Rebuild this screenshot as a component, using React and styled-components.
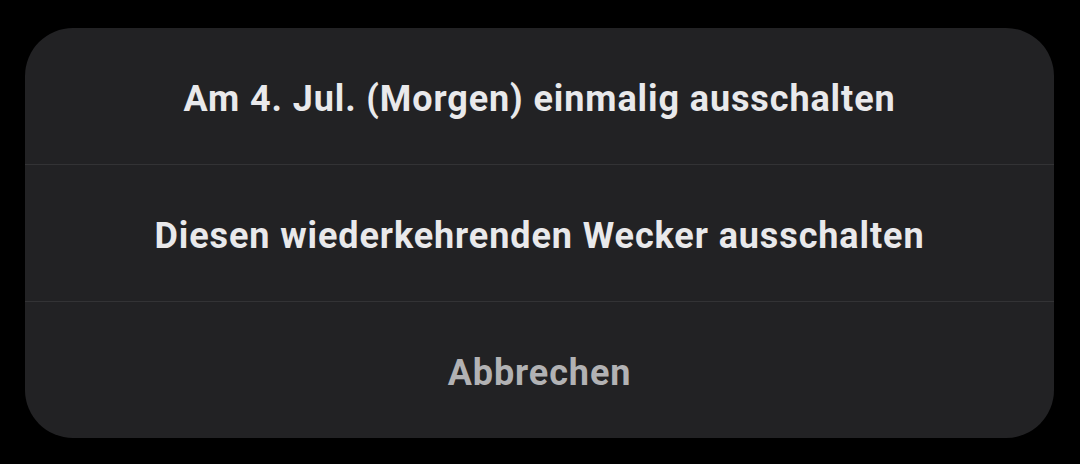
import React from "react";
import styled, { createGlobalStyle } from "styled-components";

const Global = createGlobalStyle`
  html, body { margin: 0; padding: 0; background: #000; }
  body { width: 1080px; height: 464px; overflow: hidden; font-family: Roboto, "Noto Sans", sans-serif; }
`;

const Page = styled.div`
  width: 1080px;
  height: 464px;
  box-sizing: border-box;
  padding: 28px 26px 26px 25px;
  background: #000;
  display: flex;
`;

const Sheet = styled.div`
  flex: 1;
  display: flex;
  flex-direction: column;
  background: #222224;
  border-radius: 48px;
  overflow: hidden;
`;

const Option = styled.button`
  flex: 1;
  display: flex;
  align-items: center;
  justify-content: center;
  border: 0;
  background: transparent;
  padding: 5px 0 0;
  margin: 0;
  font-family: Roboto, "Noto Sans", sans-serif;
  font-weight: 700;
  font-size: 36px;
  letter-spacing: 0.9px;
  color: ${(p) => (p.$muted ? "#b2b2b4" : "#e9e9eb")};
  border-top: ${(p) => (p.$first ? "0" : "1px solid #333335")};
  cursor: pointer;
`;

export default function App() {
  return (
    <>
      <Global />
      <Page>
        <Sheet>
          <Option $first>Am 4. Jul. (Morgen) einmalig ausschalten</Option>
          <Option>Diesen wiederkehrenden Wecker ausschalten</Option>
          <Option $muted>Abbrechen</Option>
        </Sheet>
      </Page>
    </>
  );
}
